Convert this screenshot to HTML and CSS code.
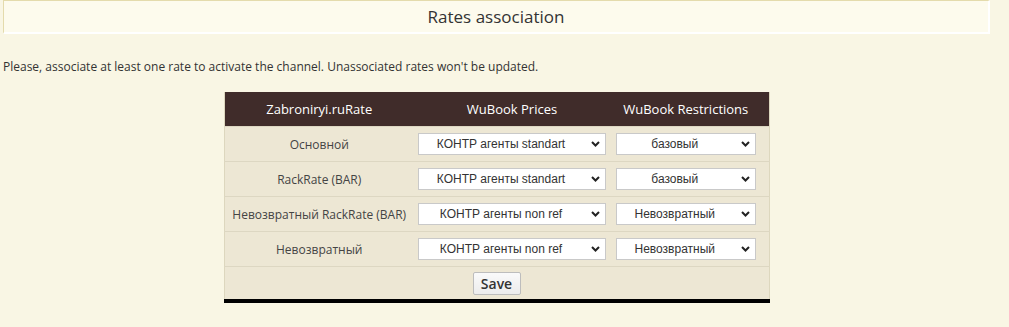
FILE: index.html
```html
<!DOCTYPE html>
<html lang="en">
<head>
  <meta charset="UTF-8" />
  <title>Rates association</title>
  <link rel="stylesheet" href="styles.css">
</head>
<body>
  <div class="page">
    <div class="title-box">
      <h2>Rates association</h2>
    </div>

    <p class="note">Please, associate at least one rate to activate the channel. Unassociated rates won't be updated.</p>

    <table class="rates">
      <colgroup>
        <col class="c1">
        <col class="c2">
        <col class="c3">
      </colgroup>
      <thead>
        <tr>
          <th>Zabroniryi.ruRate</th>
          <th>WuBook Prices</th>
          <th class="last">WuBook Restrictions</th>
        </tr>
      </thead>
      <tbody>
        <tr>
          <td>Основной</td>
          <td>
            <span class="sel wide">
              <select><option>КОНТР агенты standart</option></select>
              <svg class="chev" width="9" height="6" viewBox="0 0 9 6"><path d="M1 1 L4.5 4.5 L8 1" fill="none" stroke="#222" stroke-width="2"/></svg>
            </span>
          </td>
          <td class="last">
            <span class="sel narrow">
              <select><option>базовый</option></select>
              <svg class="chev" width="9" height="6" viewBox="0 0 9 6"><path d="M1 1 L4.5 4.5 L8 1" fill="none" stroke="#222" stroke-width="2"/></svg>
            </span>
          </td>
        </tr>
        <tr>
          <td>RackRate (BAR)</td>
          <td>
            <span class="sel wide">
              <select><option>КОНТР агенты standart</option></select>
              <svg class="chev" width="9" height="6" viewBox="0 0 9 6"><path d="M1 1 L4.5 4.5 L8 1" fill="none" stroke="#222" stroke-width="2"/></svg>
            </span>
          </td>
          <td class="last">
            <span class="sel narrow">
              <select><option>базовый</option></select>
              <svg class="chev" width="9" height="6" viewBox="0 0 9 6"><path d="M1 1 L4.5 4.5 L8 1" fill="none" stroke="#222" stroke-width="2"/></svg>
            </span>
          </td>
        </tr>
        <tr>
          <td>Невозвратный RackRate (BAR)</td>
          <td>
            <span class="sel wide">
              <select><option>КОНТР агенты non ref</option></select>
              <svg class="chev" width="9" height="6" viewBox="0 0 9 6"><path d="M1 1 L4.5 4.5 L8 1" fill="none" stroke="#222" stroke-width="2"/></svg>
            </span>
          </td>
          <td class="last">
            <span class="sel narrow">
              <select><option>Невозвратный</option></select>
              <svg class="chev" width="9" height="6" viewBox="0 0 9 6"><path d="M1 1 L4.5 4.5 L8 1" fill="none" stroke="#222" stroke-width="2"/></svg>
            </span>
          </td>
        </tr>
        <tr>
          <td>Невозвратный</td>
          <td>
            <span class="sel wide">
              <select><option>КОНТР агенты non ref</option></select>
              <svg class="chev" width="9" height="6" viewBox="0 0 9 6"><path d="M1 1 L4.5 4.5 L8 1" fill="none" stroke="#222" stroke-width="2"/></svg>
            </span>
          </td>
          <td class="last">
            <span class="sel narrow">
              <select><option>Невозвратный</option></select>
              <svg class="chev" width="9" height="6" viewBox="0 0 9 6"><path d="M1 1 L4.5 4.5 L8 1" fill="none" stroke="#222" stroke-width="2"/></svg>
            </span>
          </td>
        </tr>
        <tr class="foot">
          <td colspan="3"><button class="save-btn">Save</button></td>
        </tr>
      </tbody>
    </table>
  </div>
</body>
</html>
```

FILE: styles.css
```css
body {
  margin: 0;
  background: #f9f6e4;
  font-family: 'Open Sans', sans-serif;
  color: #333;
}

.page {
  width: 987px;
  margin-left: 3px;
}

.title-box {
  height: 34px;
  box-sizing: border-box;
  background: #fdfbed;
  border-top: 1px solid #e4dbac;
  border-left: 1px solid #e4dbac;
  border-right: 2px solid #fff;
  border-bottom: 2px solid #fff;
}

.title-box h2 {
  margin: 0;
  font-size: 17px;
  font-weight: normal;
  line-height: 31px;
  text-align: center;
  color: #333;
}

.note {
  margin: 25px 0 0;
  font-size: 12px;
  line-height: 16px;
}

.rates {
  margin: 17px auto 0;
  width: 545px;
  table-layout: fixed;
  border-collapse: collapse;
  background: #ede7d4;
  border-left: 1px solid #ddd7be;
  border-right: 1px solid #ddd7be;
  border-bottom: 4px solid #000;
}

.c1 { width: 190px; }
.c2 { width: 196px; }
.c3 { width: 159px; }

.rates th {
  background: #402c2a;
  color: #fff;
  font-weight: normal;
  font-size: 13px;
  height: 34px;
  padding: 0;
}

.rates td {
  height: 34px;
  padding: 0;
  border-top: 1px solid #ddd7c2;
  text-align: center;
  font-size: 12px;
  color: #444;
}

.rates .last {
  padding-right: 7px;
}

.sel {
  position: relative;
  display: inline-block;
  vertical-align: middle;
}

.sel select {
  appearance: none;
  -webkit-appearance: none;
  height: 22px;
  background: #fff;
  border: 1px solid #c9c9c9;
  border-radius: 0;
  font-family: 'Liberation Sans', Arial, sans-serif;
  font-size: 12px;
  color: #333;
  text-align: center;
  text-align-last: center;
  padding: 0 22px 0 0;
  margin: 0;
}

.wide select { width: 188px; }
.narrow select { width: 140px; }

.chev {
  position: absolute;
  right: 6px;
  top: 8px;
  pointer-events: none;
}

.foot td {
  height: 32px;
}

.save-btn {
  font-family: 'Open Sans', sans-serif;
  font-weight: 600;
  font-size: 14px;
  color: #333;
  background: linear-gradient(#fafafa, #ececec);
  border: 1px solid #bdbdbd;
  border-radius: 2px;
  height: 23px;
  width: 48px;
  padding: 0;
  vertical-align: middle;
}
```
